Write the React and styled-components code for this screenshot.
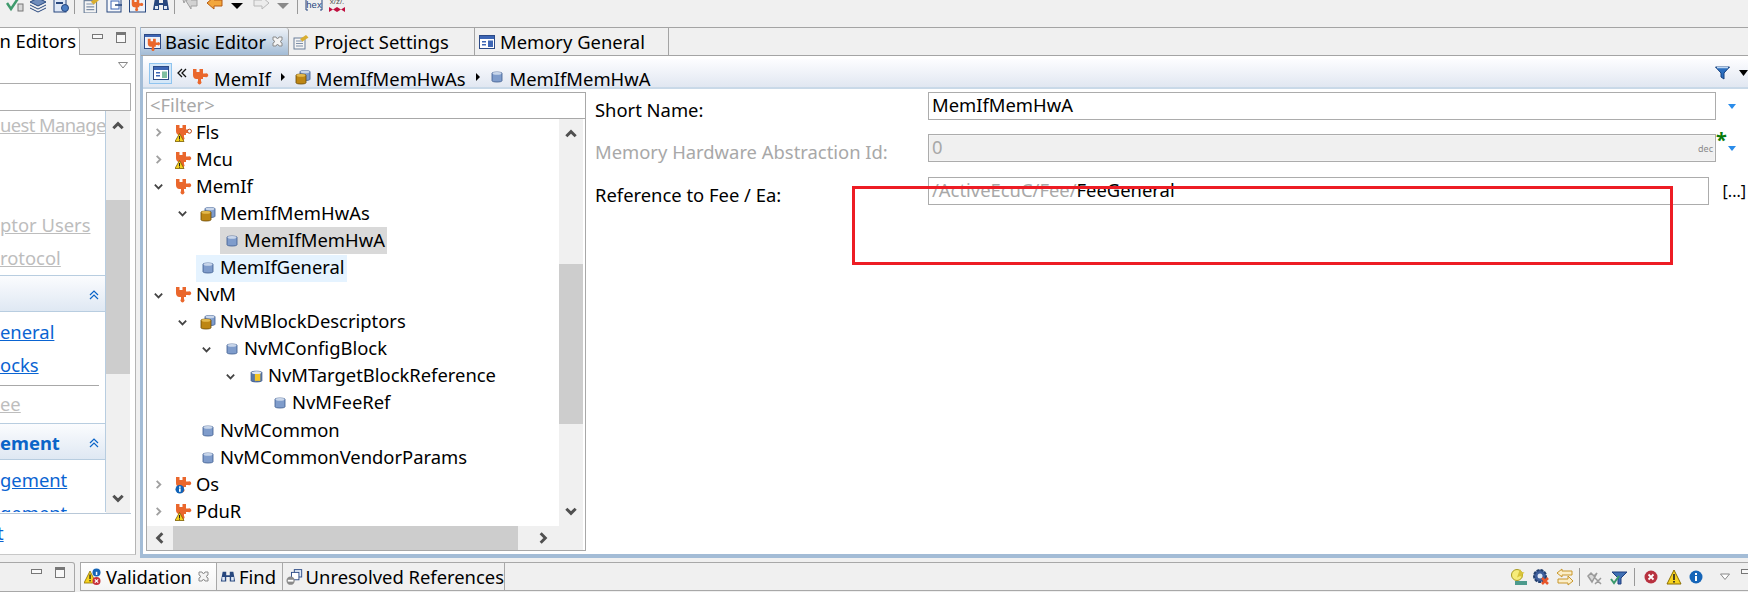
import React from "react";
import styled, { createGlobalStyle } from "styled-components";

const Global = createGlobalStyle`
  html, body { margin: 0; padding: 0; background: #f0f0f0; }
  body { font-family: "Noto Sans", "Open Sans", sans-serif; font-size: 18.4px; color: #000; }
`;

const Page = styled.div`
  width: 1748px;
  height: 592px;
  overflow: hidden;
  display: flex;
  flex-direction: column;
  background: #f0f0f0;
`;

const Toolbar = styled.div`
  height: 27px;
  flex: none;
  display: flex;
  align-items: flex-start;
  overflow: hidden;
  padding-left: 6px;
`;
const ToolIcon = styled.svg`
  width: ${(p) => p.$w || 18}px;
  height: 18px;
  margin-top: -5px;
  margin-right: ${(p) => p.$mr ?? 5}px;
  flex: none;
`;
const ToolSep = styled.div`
  width: 1px;
  height: 14px;
  background: #999;
  margin-right: ${(p) => p.$mr}px;
  margin-left: ${(p) => p.$ml || 0}px;
  flex: none;
`;

const Main = styled.div`
  height: 535px;
  flex: none;
  display: flex;
  align-items: flex-start;
`;

/* left view */
const SidePanel = styled.div`
  width: 136px;
  height: 528px;
  flex: none;
  margin-right: 4px;
  display: flex;
  flex-direction: column;
  background: #fff;
  border-right: 1px solid #b4b4b4;
  border-bottom: 1px solid #c8c8c8;
  box-sizing: border-box;
`;
const SideTabs = styled.div`
  height: 28px;
  flex: none;
  display: flex;
  box-sizing: border-box;
  border-top: 1px solid #a8a8a8;
  background: #f0f0f0;
`;
const SideTab = styled.div`
  width: 80px;
  flex: none;
  display: flex;
  justify-content: flex-end;
  align-items: center;
  white-space: nowrap;
  background: #fff;
  border-right: 1px solid #a8a8a8;
  box-sizing: border-box;
  padding-right: 3px;
  padding-bottom: 3px;
  border-top-right-radius: 3px;
`;
const SideTabRest = styled.div`
  flex: 1;
  display: flex;
  gap: 13px;
  padding: 4px 0 0 12px;
  border-bottom: 1px solid #a8a8a8;
`;
const MinBtn = styled.div`
  width: 9px;
  height: 3px;
  margin-top: 2px;
  border: 1px solid #777;
  background: #f8f8f8;
  flex: none;
`;
const MaxBtn = styled.div`
  width: 8px;
  height: 7px;
  border: 1px solid #777;
  border-top-width: 3px;
  background: #f8f8f8;
  flex: none;
`;
const EdgeMin = styled(MinBtn)`
  margin: 0 -4px 10px 0;
`;
const ViewMenu = styled.div`
  height: 28px;
  flex: none;
  display: flex;
  justify-content: flex-end;
  padding: 7px 7px 0 0;
  box-sizing: border-box;
`;
const SideFilter = styled.div`
  height: 28px;
  width: 131px;
  flex: none;
  box-sizing: border-box;
  border: 1px solid #acacac;
  border-left: none;
`;
const SideBody = styled.div`
  height: 402px;
  flex: none;
  display: flex;
  border-bottom: 1px solid #b8c8d8;
  width: 131px;
  overflow: hidden;
`;
const SideForm = styled.div`
  width: 106px;
  flex: none;
  display: flex;
  flex-direction: column;
  overflow: hidden;
`;
const SectionBox = styled.div`
  flex: none;
  height: ${(p) => p.$h}px;
  box-sizing: border-box;
  border-right: 1px solid #b8cde0;
  border-bottom: ${(p) => (p.$open ? "none" : "1px solid #b8cde0")};
  padding-top: ${(p) => p.$pt || 0}px;
  display: flex;
  flex-direction: column;
  overflow: hidden;
`;
const SectionHead = styled.div`
  height: 36px;
  flex: none;
  box-sizing: border-box;
  display: flex;
  align-items: center;
  justify-content: space-between;
  padding-right: 6px;
  padding-top: 2px;
  border-right: 1px solid #b8cde0;
  border-bottom: 1px solid #b8cde0;
  background: linear-gradient(#fbfcfe, #dfe8f3);
  color: #0a64c8;
  font-weight: 700;
`;
const SideLink = styled.a`
  height: 33px;
  flex: none;
  line-height: 32px;
  white-space: nowrap;
  margin-top: ${(p) => p.$mt || 0}px;
  letter-spacing: ${(p) => (p.$tight ? "-0.6px" : "normal")};
  color: ${(p) => (p.$off ? "#bdbdbd" : "#0a64d2")};
  text-decoration: underline;
  display: block;
`;
const SideRule = styled.div`
  height: 1px;
  width: 99px;
  flex: none;
  background: #a8a8a8;
  margin: 3px 0 2px;
`;
const SideFoot = styled.div`
  padding-top: 6px;
  margin-left: -3px;
  color: #0a64d2;
  text-decoration: underline;
`;

const VBar = styled.div`
  width: 24px;
  flex: none;
  margin-right: ${(p) => p.$mr || 0}px;
  display: flex;
  flex-direction: column;
  background: #f0f0f0;
`;
const BarBtn = styled.div`
  height: 30px;
  flex: none;
  display: flex;
  align-items: center;
  justify-content: center;
`;
const VThumb = styled.div`
  flex: none;
  height: ${(p) => p.$h}px;
  margin-top: ${(p) => p.$mt}px;
  margin-bottom: auto;
  background: #cdcdcd;
`;

/* editor area */
const Editor = styled.div`
  flex: 1;
  height: 531px;
  display: flex;
  flex-direction: column;
  box-sizing: border-box;
  border-left: 3px solid #a3bcd6;
  border-bottom: 4px solid #a3bcd6;
  background: #fff;
`;
const TabBar = styled.div`
  height: 29px;
  flex: none;
  margin-left: -2px;
  box-sizing: border-box;
  display: flex;
  background: #f0f0f0;
  border-top: 1px solid #a4a4a4;
  border-bottom: 1px solid #a4a4a4;
`;
const Tab = styled.div`
  width: ${(p) => p.$w}px;
  flex: none;
  box-sizing: border-box;
  display: flex;
  align-items: center;
  gap: ${(p) => p.$gap || 5}px;
  padding-left: ${(p) => p.$pl || 3}px;
  border-right: 1px solid #a4a4a4;
  white-space: nowrap;
  background: ${(p) => (p.$active ? "linear-gradient(#eef2f7, #a3bcd6)" : "transparent")};
  border-top-left-radius: ${(p) => (p.$active ? 3 : 0)}px;
  border-top-right-radius: ${(p) => (p.$active ? 3 : 0)}px;
`;
const TabClose = styled.svg`
  width: 11px;
  height: 11px;
  margin-left: 3px;
  flex: none;
`;
const Crumbs = styled.div`
  height: 30px;
  margin-top: 3px;
  flex: none;
  box-sizing: border-box;
  display: flex;
  align-items: center;
  padding-left: 6px;
  background: linear-gradient(#fdfdff, #e1e7f1);
  border-bottom: 2px solid #c9d9e8;
  overflow: hidden;
  line-height: 22px;
`;
const CrumbToggle = styled.div`
  width: 23px;
  height: 21px;
  flex: none;
  box-sizing: border-box;
  display: flex;
  align-items: center;
  justify-content: center;
  background: #d4e7f8;
  border: 1px solid #8fc4ef;
`;
const CrumbText = styled.span`
  padding-top: 12px;
  margin-left: ${(p) => p.$ml || 0}px;
  white-space: nowrap;
`;
const CrumbIcon = styled.span`
  display: flex;
  flex: none;
  padding-top: 8px;
`;
const CrumbSpacer = styled.div`
  flex: 1;
`;
const CrumbSvg = styled.svg`
  flex: none;
  margin-left: ${(p) => p.$ml || 0}px;
  margin-right: ${(p) => p.$mr || 0}px;
  margin-top: ${(p) => p.$mt || 0}px;
`;

const Body = styled.div`
  flex: 1;
  display: flex;
  min-height: 0;
`;
const TreePane = styled.div`
  width: 440px;
  flex: none;
  margin: 3px 0 3px 3px;
  box-sizing: border-box;
  border: 1px solid #a8a8a8;
  display: flex;
  flex-direction: column;
`;
const TreeFilter = styled.div`
  height: 26px;
  flex: none;
  box-sizing: border-box;
  border-bottom: 1px solid #a8a8a8;
  color: #a8a8a8;
  padding-left: 3px;
  line-height: 24px;
`;
const TreeWrap = styled.div`
  flex: 1;
  display: flex;
  min-height: 0;
`;
const TreeList = styled.div`
  flex: 1;
  padding-left: 1px;
  overflow: hidden;
`;
const Row = styled.div`
  height: 27.1px;
  display: flex;
  align-items: center;
  padding-left: ${(p) => p.$level * 24}px;
`;
const Twist = styled.div`
  width: 20px;
  margin-right: 4px;
  flex: none;
  display: flex;
  align-items: center;
  justify-content: center;
`;
const Item = styled.div`
  display: flex;
  align-items: center;
  height: 27px;
  padding-right: 2px;
  background: ${(p) => (p.$sel === "grey" ? "#d9d9d9" : p.$sel === "hover" ? "#e5f3ff" : "transparent")};
  white-space: nowrap;
`;
const ItemIcon = styled.div`
  width: 24px;
  flex: none;
  display: flex;
  align-items: center;
  justify-content: center;
`;
const ItemText = styled.span`
  line-height: 24px;
  padding-bottom: 2px;
`;
const HBar = styled.div`
  height: 24px;
  flex: none;
  margin-right: 2px;
  display: flex;
  background: #f0f0f0;
`;
const HBtn = styled.div`
  width: ${(p) => p.$w}px;
  flex: none;
  display: flex;
  align-items: center;
  justify-content: center;
`;
const HThumb = styled.div`
  width: 345px;
  flex: none;
  background: #cdcdcd;
`;

const FormPane = styled.div`
  flex: 1;
  position: relative;
  padding: 3px 0 0 9px;
`;
const FieldRow = styled.div`
  height: 28px;
  display: flex;
  align-items: center;
  margin-bottom: ${(p) => p.$mb || 14}px;
`;
const FieldLabel = styled.div`
  width: 333px;
  flex: none;
  padding-top: 6px;
  color: ${(p) => (p.$off ? "#a8a8a8" : "#000")};
  white-space: nowrap;
`;
const Field = styled.div`
  flex: 1;
  height: 28px;
  box-sizing: border-box;
  border: 1px solid #acacac;
  background: ${(p) => (p.$off ? "#f0f0f0" : "#fff")};
  box-shadow: ${(p) => (p.$off ? "inset 0 0 0 1px #f4f4f4" : "none")};
  color: ${(p) => (p.$off ? "#a8a8a8" : "#000")};
  line-height: 23px;
  padding-left: 3px;
  display: flex;
  justify-content: space-between;
  white-space: nowrap;
  overflow: hidden;
`;
const Dec = styled.span`
  font-size: 9px;
  color: #8a8a8a;
  line-height: 27px;
  padding-right: 2px;
`;
const MutedPath = styled.span`
  color: #a8a8a8;
`;
const FieldEnd = styled.div`
  width: ${(p) => p.$w}px;
  flex: none;
  position: relative;
  height: 28px;
  display: flex;
  align-items: center;
  justify-content: ${(p) => (p.$text ? "flex-end" : "center")};
  font-size: ${(p) => (p.$text ? 16 : 17)}px;
  padding-right: ${(p) => (p.$text ? 2 : 1)}px;
  box-sizing: border-box;
`;
const Star = styled.span`
  position: absolute;
  left: 0;
  top: -4px;
  color: #0a7a0a;
  font-size: 20px;
  font-weight: 700;
  line-height: 20px;
`;
const RedFrame = styled.div`
  position: absolute;
  left: 266px;
  top: 97px;
  width: 821px;
  height: 79px;
  box-sizing: border-box;
  border: 3.5px solid #ed1c24;
`;

/* bottom view */
const BottomBar = styled.div`
  height: 30px;
  flex: none;
  display: flex;
`;
const BottomLeft = styled.div`
  width: 75px;
  flex: none;
  box-sizing: border-box;
  display: flex;
  justify-content: flex-end;
  gap: 13px;
  padding: 4px 9px 0 0;
  border-top: 1px solid #a8a8a8;
  border-right: 1px solid #a8a8a8;
  border-bottom: 1px solid #a8a8a8;
  border-top-right-radius: 3px;
  margin-right: 5px;
`;
const BottomTabs = styled.div`
  flex: 1;
  display: flex;
  box-sizing: border-box;
  border-top: 1px solid #a8a8a8;
  border-bottom: 1px solid #a8a8a8;
  border-left: 1px solid #a8a8a8;
  height: 29px;
`;
const BottomTab = styled.div`
  width: ${(p) => p.$w}px;
  flex: none;
  box-sizing: border-box;
  display: flex;
  align-items: center;
  gap: 3px;
  padding-left: 3px;
  white-space: nowrap;
  border-right: 1px solid #a8a8a8;
  background: ${(p) => (p.$active ? "linear-gradient(#fff, #f4f4f4)" : "transparent")};
`;
const BottomTools = styled.div`
  flex: 1;
  display: flex;
  align-items: center;
  justify-content: flex-end;
`;
const StatusIcon = styled.svg`
  width: ${(p) => p.$w || 18}px;
  height: 18px;
  flex: none;
  margin-right: ${(p) => p.$mr ?? 5}px;
`;
const StatusSep = styled.div`
  width: 1px;
  height: 18px;
  background: #999;
  flex: none;
  margin-right: 7px;
`;

const Chevron = ({ dir = "right", color = "#444", size = 12, sw = 2 }) => {
  const pts = {
    right: "4,2 8,6 4,10",
    left: "8,2 4,6 8,10",
    down: "2,4 6,8 10,4",
    up: "2,8 6,4 10,8",
  }[dir];
  return (
    <svg width={size} height={size} viewBox="0 0 12 12">
      <polyline points={pts} fill="none" stroke={color} strokeWidth={sw} />
    </svg>
  );
};

const PLUGIN_D = "M1 1h3.5v3h3V1H11v4.5h2.2a2 2 0 1 1 0 3.4H11V11H9v2a2 2 0 1 1-3 0v-2H4.5C2 11 1 9 1 7z";

const Plugin = ({ badge, hollow, size = 18 }) => (
  <svg width={size} height={size} viewBox="0 0 18 18">
    <path d={PLUGIN_D} fill="#ea672c" />
    {hollow && <circle cx="14.5" cy="7.2" r="2" fill="#fff" stroke="#c05020" strokeWidth="1" />}
    {badge === "warn" && (
      <g>
        <path d="M4.5 9.5 9 17.5H0z" fill="#f6d21e" stroke="#7a5c00" strokeWidth=".8" />
        <rect x="4" y="12" width="1" height="3" fill="#222" />
        <rect x="4" y="15.6" width="1" height="1" fill="#222" />
      </g>
    )}
    {badge === "info" && (
      <g>
        <circle cx="4.8" cy="13.2" r="4.3" fill="#0f63b8" />
        <rect x="4" y="12.4" width="1.7" height="3.4" fill="#fff" />
        <rect x="4" y="10.4" width="1.7" height="1.4" fill="#fff" />
      </g>
    )}
  </svg>
);

const Can = ({ body = "#7f9ccb", top = "#c9d6ea", edge = "#3e5c8e", x = 0, y = 0 }) => (
  <g transform={`translate(${x} ${y})`}>
    <path d="M0 2.2C0 .7 10 .7 10 2.2v7.6c0 1.6-10 1.6-10 0z" fill={body} stroke={edge} strokeWidth=".8" />
    <ellipse cx="5" cy="2.4" rx="4.4" ry="1.4" fill={top} />
  </g>
);
const BlueCan = () => (
  <svg width="14" height="14" viewBox="-2 -1 14 14">
    <Can />
  </svg>
);
const GoldStack = () => (
  <svg width="16" height="16" viewBox="0 0 16 16">
    <Can x={5} y={0.5} />
    <Can x={1} y={4} body="#bd8614" top="#e3b94e" edge="#6b4a05" />
  </svg>
);
const GoldCan = () => (
  <svg width="13" height="14" viewBox="-1 -1 12 13">
    <path d="M0 2.2C0 .7 10 .7 10 2.2v7.6c0 1.6-10 1.6-10 0z" fill="#5877a8" stroke="#3e5c8e" strokeWidth=".8" />
    <rect x="3.5" y="2" width="5" height="8" fill="#f4c525" />
    <ellipse cx="5" cy="2.4" rx="4.4" ry="1.3" fill="#dfe6f2" />
  </svg>
);

const TREE = [
  { label: "Fls", level: 0, tw: "closed", icon: <Plugin badge="warn" hollow /> },
  { label: "Mcu", level: 0, tw: "closed", icon: <Plugin badge="warn" /> },
  { label: "MemIf", level: 0, tw: "open", icon: <Plugin /> },
  { label: "MemIfMemHwAs", level: 1, tw: "open", icon: <GoldStack /> },
  { label: "MemIfMemHwA", level: 2, icon: <BlueCan />, sel: "grey" },
  { label: "MemIfGeneral", level: 1, icon: <BlueCan />, sel: "hover" },
  { label: "NvM", level: 0, tw: "open", icon: <Plugin /> },
  { label: "NvMBlockDescriptors", level: 1, tw: "open", icon: <GoldStack /> },
  { label: "NvMConfigBlock", level: 2, tw: "open", icon: <BlueCan /> },
  { label: "NvMTargetBlockReference", level: 3, tw: "open", icon: <GoldCan /> },
  { label: "NvMFeeRef", level: 4, icon: <BlueCan /> },
  { label: "NvMCommon", level: 1, icon: <BlueCan /> },
  { label: "NvMCommonVendorParams", level: 1, icon: <BlueCan /> },
  { label: "Os", level: 0, tw: "closed", icon: <Plugin badge="info" /> },
  { label: "PduR", level: 0, tw: "closed", icon: <Plugin badge="warn" /> },
];

const Binoculars = () => (
  <svg width="16" height="18" viewBox="0 0 18 18">
    <path d="M3 3h4v4h4V3h4l2 11h-6V9H7v5H1z" fill="#27477e" />
    <rect x="2.5" y="9" width="3" height="4" fill="#dfe8f6" />
    <rect x="12.5" y="9" width="3" height="4" fill="#dfe8f6" />
  </svg>
);
const FormIcon = ({ accent = "#7fc0a0" }) => (
  <svg width="16" height="16" viewBox="0 0 16 16">
    <rect x=".5" y="1.5" width="15" height="13" fill="#fff" stroke="#2c4a86" />
    <rect x="1" y="2" width="14" height="3" fill="#3d66b5" />
    <rect x="3" y="7" width="4" height="1.5" fill="#3d66b5" />
    <rect x="3" y="10" width="4" height="1.5" fill="#3d66b5" />
    <rect x="9" y="6.5" width="5" height="6.5" fill={accent} />
  </svg>
);
const FormPlugin = () => (
  <svg width="18" height="18" viewBox="0 0 18 18">
    <rect x=".5" y="1.5" width="16" height="14" fill="#eef3fb" stroke="#2c4a86" />
    <rect x="1" y="2" width="15" height="2" fill="#3d66b5" />
    <g transform="translate(3 5) scale(.8)">
      <path d={PLUGIN_D} fill="#ea672c" />
    </g>
  </svg>
);
const NoteIcon = () => (
  <svg width="16" height="16" viewBox="0 0 16 16">
    <rect x="1" y="4" width="11" height="11" fill="#f4f4f4" stroke="#6b7f99" />
    <path d="M3 7h7M3 9.5h7M3 12h7" stroke="#7d8fa8" />
    <path d="M7 5l6-4 2.5 2.5-6 4z" fill="#d9ae2f" />
  </svg>
);
const MiniClose = () => (
  <TabClose viewBox="0 0 11 11">
    <path d="M1 1h3l1.5 2L7 1h3v3L8 5.500 10 7v3H7L5.500 8 4 10H1V7l2-1.500L1 4z" fill="#f4f4f4" stroke="#8b8b8b" />
  </TabClose>
);
const ValidationIcon = () => (
  <svg width="19" height="18" viewBox="0 0 19 18">
    <path d="M6 3 12 15H0z" fill="#f7d31e" stroke="#8a6d00" strokeWidth=".8" />
    <rect x="5.4" y="6.5" width="1.3" height="4.5" fill="#222" />
    <rect x="5.4" y="12" width="1.3" height="1.4" fill="#222" />
    <circle cx="12.5" cy="4.5" r="4" fill="#1565b8" />
    <rect x="11.8" y="3.8" width="1.5" height="3.2" fill="#fff" />
    <circle cx="12.5" cy="13" r="4" fill="#c8323c" />
    <path d="M10.800 11.300l3.400 3.400m0-3.400l-3.400 3.400" stroke="#fff" strokeWidth="1.2" />
  </svg>
);
const RefsIcon = () => (
  <svg width="18" height="18" viewBox="0 0 18 18">
    <rect x="9" y="1" width="8" height="8" fill="#dfe8f6" stroke="#2c4a86" />
    <rect x="6" y="4" width="8" height="8" fill="#fff" stroke="#2c4a86" />
    <circle cx="5" cy="13" r="4.5" fill="#8a8a8a" />
    <rect x="2" y="12" width="6" height="2" fill="#fff" />
  </svg>
);
const Chevrons = () => (
  <svg width="10" height="10" viewBox="0 0 10 10">
    <path d="M1 5l4-4 4 4M1 9l4-4 4 4" fill="none" stroke="#0a64c8" strokeWidth="1.2" />
  </svg>
);
const SmallDrop = () => (
  <svg width="8" height="5" viewBox="0 0 8 5">
    <path d="M0 0h8L4 5z" fill="#2a8cea" />
  </svg>
);
const CrumbArrow = () => (
  <CrumbSvg width="6" height="10" viewBox="0 0 6 10" $ml={9} $mr={9} $mt={8}>
    <path d="M1 1l4 4-4 4z" fill="#000" />
  </CrumbSvg>
);

export default function App() {
  return (
    <Page>
      <Global />
      <Toolbar>
        <ToolIcon viewBox="0 0 18 18">
          <path d="M1 8l4 6 8-12" fill="none" stroke="#3f9a6c" strokeWidth="2.5" />
          <rect x="12" y="9" width="5" height="7" fill="#d8d8d8" stroke="#777" />
        </ToolIcon>
        <ToolIcon viewBox="0 0 18 18">
          <path d="M1 7l8-4 8 4-8 4z" fill="#6f8cbb" stroke="#27477e" />
          <path d="M1 10l8 4 8-4M1 13l8 4 8-4" fill="none" stroke="#27477e" />
        </ToolIcon>
        <ToolIcon viewBox="0 0 18 18">
          <rect x="2" y="2" width="12" height="15" fill="#dfe8f6" stroke="#27477e" />
          <rect x="4" y="7" width="7" height="2" fill="#27477e" />
          <circle cx="13" cy="13" r="3.5" fill="#4d7fc4" stroke="#27477e" />
        </ToolIcon>
        <ToolSep $ml={-1} $mr={8} />
        <ToolIcon viewBox="0 0 16 16">
          <rect x="1" y="5" width="11" height="11" fill="#f4f4f4" stroke="#6b7f99" />
          <path d="M3 8h7M3 10.5h7M3 13h7" stroke="#7d8fa8" />
          <path d="M7 6l6-5 2.5 2.5-6 5z" fill="#d9ae2f" />
        </ToolIcon>
        <ToolIcon viewBox="0 0 18 18">
          <rect x="1" y="2" width="14" height="15" fill="#f6f8fc" stroke="#27477e" />
          <rect x="5" y="6" width="8" height="8" fill="#fff" stroke="#3d66b5" />
          <path d="M9 10h7" stroke="#27477e" strokeWidth="1.5" />
        </ToolIcon>
        <ToolIcon viewBox="0 0 18 18">
          <rect x=".5" y="1.5" width="16" height="15.5" fill="#eef3fb" stroke="#27477e" />
          <g transform="translate(2 4) scale(.75)">
            <path d={PLUGIN_D} fill="#ea672c" />
          </g>
        </ToolIcon>
        <ToolIcon viewBox="0 0 18 18" $mr={4}>
          <path d="M3 3h4v5h4V3h4l2 12h-6v-5H7v5H1z" fill="#27477e" />
          <rect x="3" y="11" width="3" height="3" fill="#dfe8f6" />
          <rect x="12" y="11" width="3" height="3" fill="#dfe8f6" />
        </ToolIcon>
        <ToolSep $mr={6} />
        <ToolIcon viewBox="0 0 18 18" $mr={7}>
          <path d="M1 2l4 2-2 4zM5 6l5-4v3h6v6h-6v3z" fill="#d2d2d2" stroke="#a0a0a0" />
        </ToolIcon>
        <ToolIcon viewBox="0 0 18 18" $mr={7}>
          <path d="M1 8l7-6v3h8v6H8v3z" fill="#f2a63c" stroke="#b65b12" />
        </ToolIcon>
        <ToolIcon viewBox="0 0 12 18" $w={12} $mr={9}>
          <path d="M0 8h12l-6 6z" fill="#000" />
        </ToolIcon>
        <ToolIcon viewBox="0 0 18 18" $mr={7}>
          <path d="M17 8l-7-6v3H2v6h8v3z" fill="#ececec" stroke="#b8b8b8" />
        </ToolIcon>
        <ToolIcon viewBox="0 0 12 18" $w={12} $mr={8}>
          <path d="M0 8h12l-6 6z" fill="#8a8a8a" />
        </ToolIcon>
        <ToolSep $mr={7} />
        <ToolIcon viewBox="0 0 18 18" $mr={5}>
          <path d="M3 4H1v11h2M15 4h2v11h-2" fill="none" stroke="#27477e" />
          <text x="9" y="13" textAnchor="middle" fontSize="9.5" fill="#27477e" fontFamily="Liberation Sans, sans-serif">hex</text>
        </ToolIcon>
        <ToolIcon viewBox="0 0 18 18" $mr={0}>
          <text x="9" y="9" textAnchor="middle" fontSize="8" fill="#555" fontFamily="Liberation Sans, sans-serif">x/z/.</text>
          <path d="M1 12l4 2.500-4 2.500zM9 12l-4 2.500 4 2.500zM9 12l4 2.500-4 2.500zM17 12l-4 2.500 4 2.500z" fill="#c01040" />
        </ToolIcon>
      </Toolbar>

      <Main>
        <SidePanel>
          <SideTabs>
            <SideTab>n Editors</SideTab>
            <SideTabRest>
              <MinBtn />
              <MaxBtn />
            </SideTabRest>
          </SideTabs>
          <ViewMenu>
            <svg width="10" height="7" viewBox="0 0 10 7">
              <path d="M.5.5h9L5 6z" fill="#fff" stroke="#888" />
            </svg>
          </ViewMenu>
          <SideFilter />
          <SideBody>
            <SideForm>
              <SectionBox $h={165}>
                <SideLink $off $mt={-2} $tight>uest Manage</SideLink>
                <SideLink $off $mt={67}>ptor Users</SideLink>
                <SideLink $off>rotocol</SideLink>
              </SectionBox>
              <SectionHead>
                <span />
                <Chevrons />
              </SectionHead>
              <SectionBox $h={112} $pt={4}>
                <SideLink>eneral</SideLink>
                <SideLink>ocks</SideLink>
                <SideRule />
                <SideLink $off>ee</SideLink>
              </SectionBox>
              <SectionHead>
                <span>ement</span>
                <Chevrons />
              </SectionHead>
              <SectionBox $h={52} $pt={4} $open>
                <SideLink>gement</SideLink>
                <SideLink>gement</SideLink>
              </SectionBox>
            </SideForm>
            <VBar>
              <BarBtn><Chevron dir="up" color="#505050" size={14} sw={2.5} /></BarBtn>
              <VThumb $mt={59} $h={174} />
              <BarBtn><Chevron dir="down" color="#505050" size={14} sw={2.5} /></BarBtn>
            </VBar>
          </SideBody>
          <SideFoot>t</SideFoot>
        </SidePanel>

        <Editor>
          <TabBar>
            <Tab $w={148} $active $gap={3}>
              <FormPlugin />
              Basic Editor
              <MiniClose />
            </Tab>
            <Tab $w={186} $pl={4}>
              <NoteIcon />
              Project Settings
            </Tab>
            <Tab $w={194} $pl={4}>
              <FormIcon accent="#3d66b5" />
              Memory General
            </Tab>
          </TabBar>
          <Crumbs>
            <CrumbToggle><FormIcon /></CrumbToggle>
            <CrumbSvg width="10" height="10" viewBox="0 0 10 10" $ml={5} $mr={5}>
              <path d="M5 1 1 5l4 4M9 1 5 5l4 4" fill="none" stroke="#111" strokeWidth="1.3" />
            </CrumbSvg>
            <CrumbIcon><Plugin /></CrumbIcon>
            <CrumbText $ml={4}>MemIf</CrumbText>
            <CrumbArrow />
            <CrumbIcon><GoldStack /></CrumbIcon>
            <CrumbText $ml={5}>MemIfMemHwAs</CrumbText>
            <CrumbArrow />
            <CrumbIcon><BlueCan /></CrumbIcon>
            <CrumbText $ml={6}>MemIfMemHwA</CrumbText>
            <CrumbSpacer />
            <CrumbSvg width="15" height="14" viewBox="0 0 15 14" $mr={9}>
              <path d="M.5 1h14L9 7v6L6 11V7z" fill="#2b6fc0" stroke="#17417f" />
              <path d="M2 1.5h11" stroke="#bcd6f2" strokeWidth="1.5" />
            </CrumbSvg>
            <CrumbSvg width="9" height="6" viewBox="0 0 9 6">
              <path d="M0 0h9L4.5 6z" fill="#000" />
            </CrumbSvg>
          </Crumbs>
          <Body>
            <TreePane>
              <TreeFilter>&lt;Filter&gt;</TreeFilter>
              <TreeWrap>
                <TreeList>
                  {TREE.map((n) => (
                    <Row key={n.label} $level={n.level}>
                      <Twist>
                        {n.tw === "open" && <Chevron dir="down" color="#444" size={11} />}
                        {n.tw === "closed" && <Chevron dir="right" color="#a0a0a0" size={11} />}
                      </Twist>
                      <Item $sel={n.sel}>
                        <ItemIcon>{n.icon}</ItemIcon>
                        <ItemText>{n.label}</ItemText>
                      </Item>
                    </Row>
                  ))}
                </TreeList>
                <VBar $mr={2}>
                  <BarBtn><Chevron dir="up" color="#505050" size={14} sw={2.5} /></BarBtn>
                  <VThumb $mt={115} $h={160} />
                  <BarBtn><Chevron dir="down" color="#505050" size={14} sw={2.5} /></BarBtn>
                </VBar>
              </TreeWrap>
              <HBar>
                <HBtn $w={26}><Chevron dir="left" color="#505050" size={14} sw={2.5} /></HBtn>
                <HThumb />
                <HBtn $w={50}><Chevron dir="right" color="#505050" size={14} sw={2.5} /></HBtn>
              </HBar>
            </TreePane>
            <FormPane>
              <FieldRow>
                <FieldLabel>Short Name:</FieldLabel>
                <Field>MemIfMemHwA</Field>
                <FieldEnd $w={32}><SmallDrop /></FieldEnd>
              </FieldRow>
              <FieldRow $mb={15}>
                <FieldLabel $off>Memory Hardware Abstraction Id:</FieldLabel>
                <Field $off>
                  0
                  <Dec>dec</Dec>
                </Field>
                <FieldEnd $w={32}>
                  <Star>*</Star>
                  <SmallDrop />
                </FieldEnd>
              </FieldRow>
              <FieldRow>
                <FieldLabel>Reference to Fee / Ea:</FieldLabel>
                <Field>
                  <span><MutedPath>/ActiveEcuC/Fee/</MutedPath>FeeGeneral</span>
                </Field>
                <FieldEnd $w={39} $text>[...]</FieldEnd>
              </FieldRow>
              <RedFrame />
            </FormPane>
          </Body>
        </Editor>
      </Main>

      <BottomBar>
        <BottomLeft>
          <MinBtn />
          <MaxBtn />
        </BottomLeft>
        <BottomTabs>
          <BottomTab $w={136} $active>
            <ValidationIcon />
            Validation
            <MiniClose />
          </BottomTab>
          <BottomTab $w={66}>
            <Binoculars />
            Find
          </BottomTab>
          <BottomTab $w={222}>
            <RefsIcon />
            Unresolved References
          </BottomTab>
          <BottomTools>
            <StatusIcon viewBox="0 0 18 18" $mr={4}>
              <circle cx="7" cy="7" r="5.5" fill="#f6ec7a" stroke="#a89a20" />
              <path d="M10 1l1.500 3 3 .4-2.200 2 .6 3L10 8l-3 1.400z" fill="#d8c43a" />
              <path d="M5 13h12v4H5z" fill="#4c9a8c" />
            </StatusIcon>
            <StatusIcon viewBox="0 0 18 18" $mr={6}>
              <circle cx="8" cy="8" r="6" fill="#3f5f9c" stroke="#24406f" strokeWidth="2" strokeDasharray="3 1" />
              <circle cx="8" cy="8" r="2.5" fill="#dfe8f6" />
              <path d="M10 10l6 6m0-6l-6 6" stroke="#e8552a" strokeWidth="2.5" />
            </StatusIcon>
            <StatusIcon viewBox="0 0 18 18" $mr={5}>
              <path d="M6 1 1 5l5 4V7h10V3H6zM12 8l5 5-5 4v-2H2v-4h10z" fill="#fbeec8" stroke="#c8962a" />
            </StatusIcon>
            <StatusSep />
            <StatusIcon viewBox="0 0 18 18" $mr={5}>
              <path d="M1 8l3-3 3 3 3-3-5 9zM8 10l6 6m0-6l-6 6" fill="#d8d8d8" stroke="#9a9a9a" strokeWidth="1.5" />
            </StatusIcon>
            <StatusIcon viewBox="0 0 18 18" $mr={6}>
              <path d="M2 4h15l-6 6v6H8v-6z" fill="#3f6fb4" stroke="#1f3f7f" />
              <path d="M1 11l3 4 5-7" fill="none" stroke="#3a9a6c" strokeWidth="2" />
            </StatusIcon>
            <StatusSep />
            <StatusIcon viewBox="0 0 18 18" $mr={5}>
              <circle cx="9" cy="9" r="6.5" fill="#b83240" />
              <path d="M6.500 6.500l5 5m0-5l-5 5" stroke="#fff" strokeWidth="1.8" />
            </StatusIcon>
            <StatusIcon viewBox="0 0 18 18" $mr={4}>
              <path d="M9 2l7 14H2z" fill="#f7d31e" stroke="#8a6d00" />
              <rect x="8.2" y="6" width="1.6" height="6" fill="#222" />
              <rect x="8.2" y="13" width="1.6" height="1.6" fill="#222" />
            </StatusIcon>
            <StatusIcon viewBox="0 0 18 18" $mr={15}>
              <circle cx="9" cy="9" r="6.5" fill="#1565b8" />
              <rect x="8" y="8" width="2" height="5" fill="#fff" />
              <rect x="8" y="5" width="2" height="2" fill="#fff" />
            </StatusIcon>
            <StatusIcon viewBox="0 0 10 7" $w={10} $mr={11}>
              <path d="M.5.5h9L5 6z" fill="#fff" stroke="#888" />
            </StatusIcon>
            <EdgeMin />
          </BottomTools>
        </BottomTabs>
      </BottomBar>
    </Page>
  );
}
